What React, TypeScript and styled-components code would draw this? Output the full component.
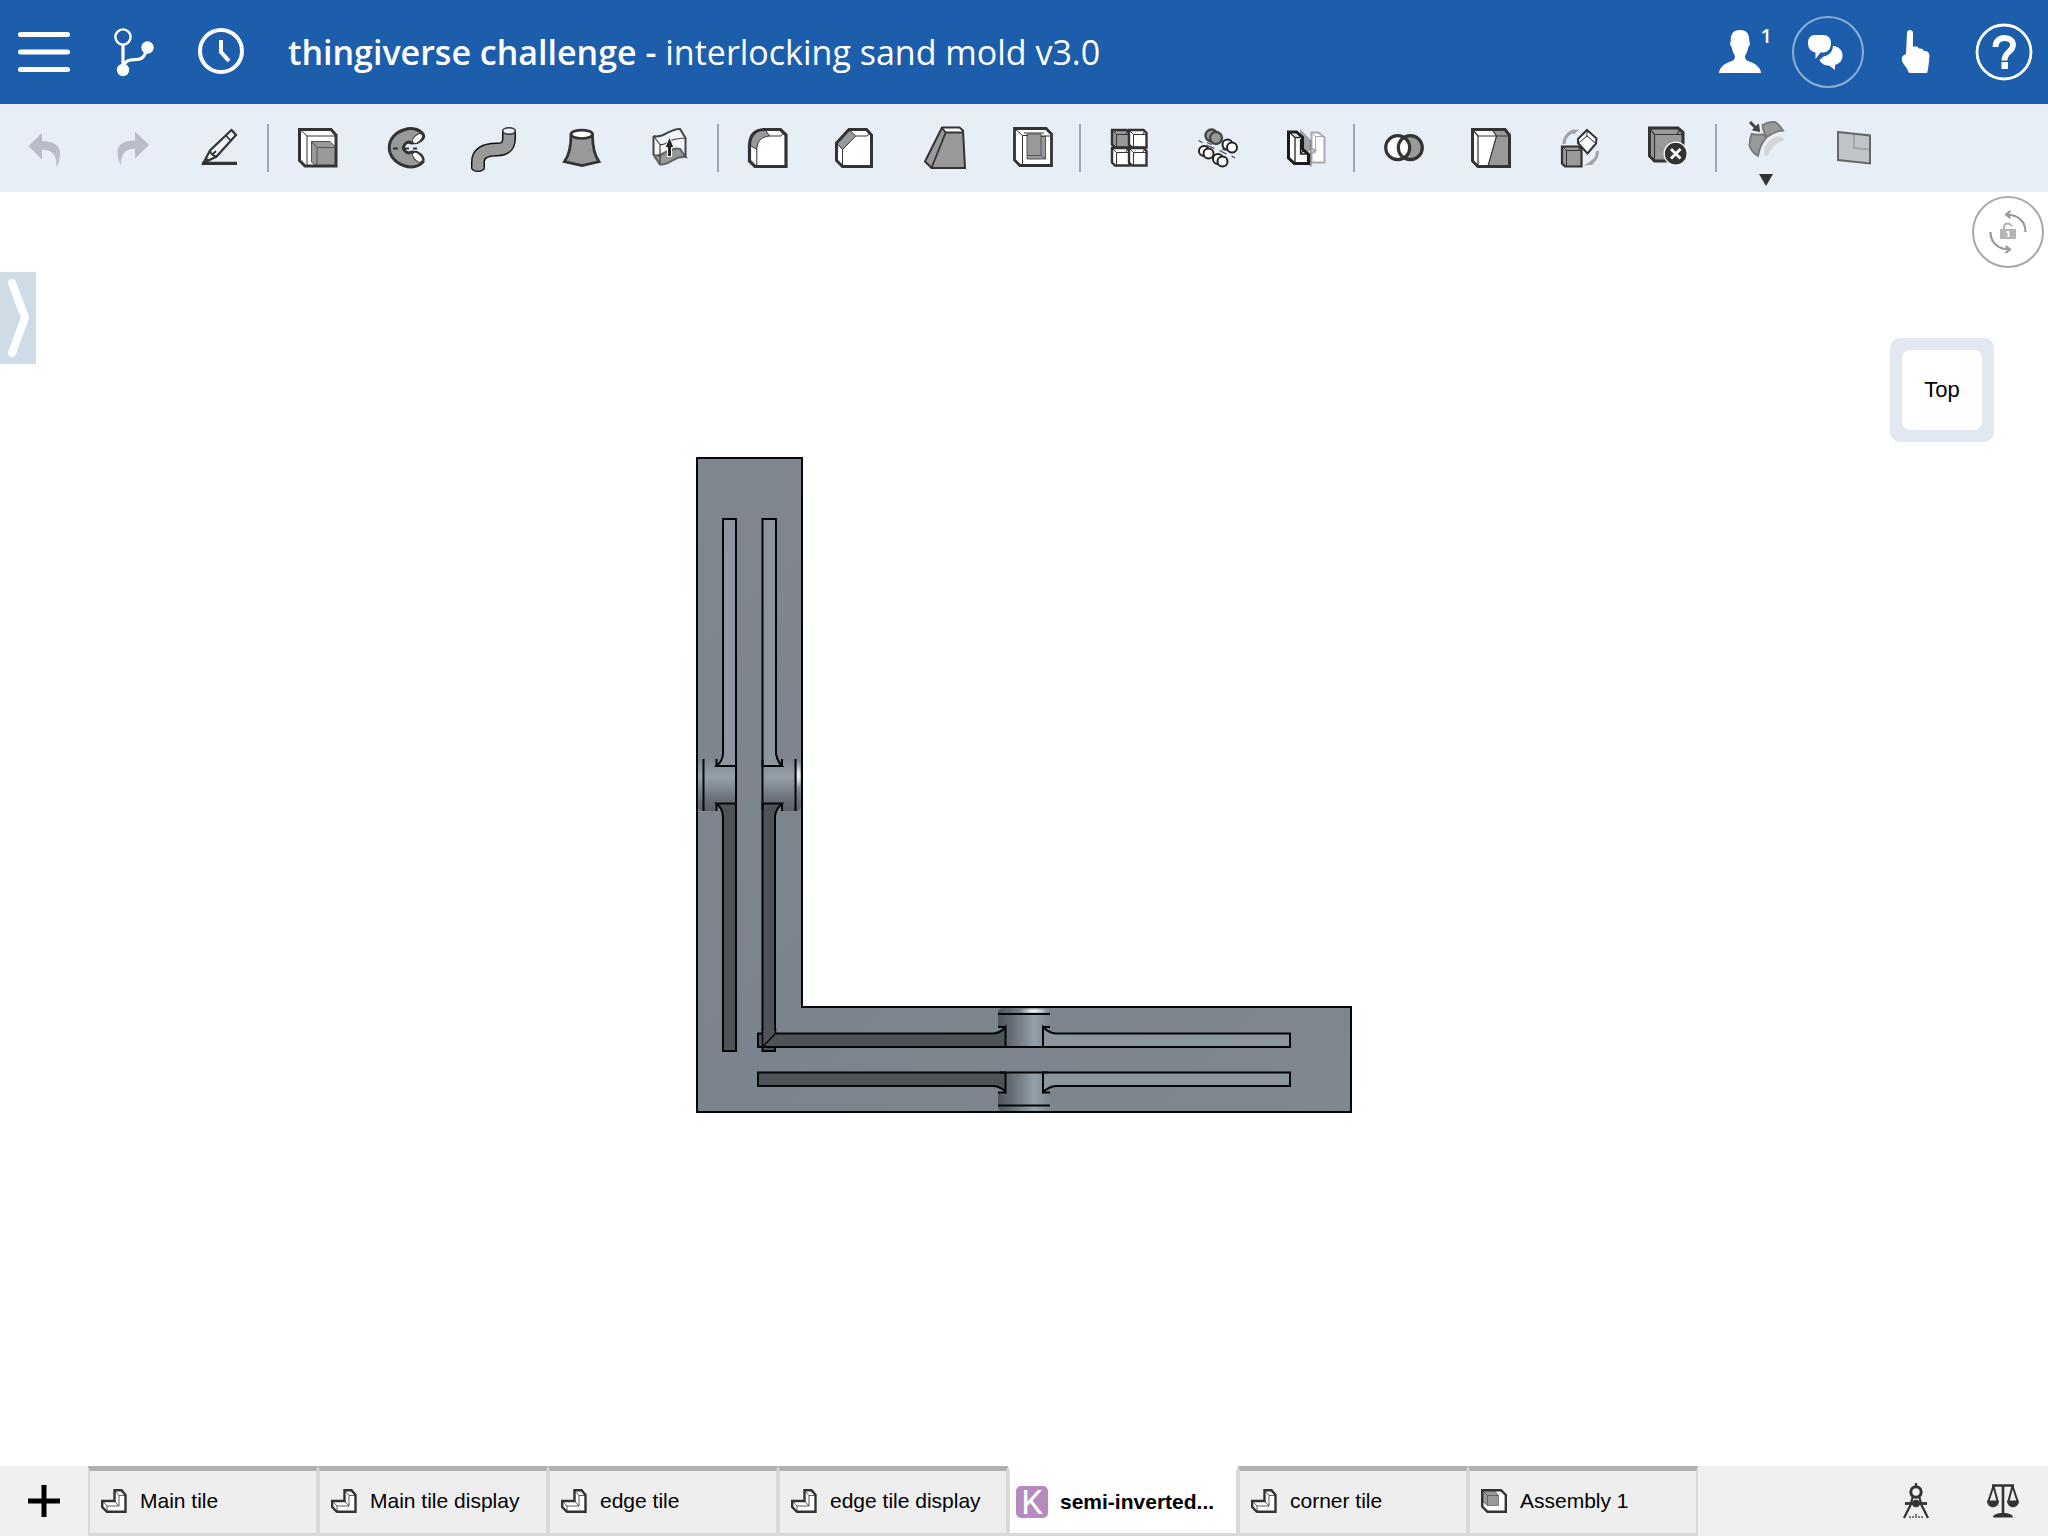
import React from "react";
import styled, { createGlobalStyle, css } from "styled-components";

const GlobalStyle = createGlobalStyle`
  *, *::before, *::after { box-sizing: border-box; }
  body { margin: 0; background: #fff; font-family: "Liberation Sans", Arial, sans-serif; color: #000; }
  svg { display: block; flex: none; }
`;

const INK = "#333";
const GREY = "#999";

/* ---------- layout ---------- */

const Page = styled.div`
  display: flex;
  flex-direction: column;
  min-height: 100vh;
`;

const bareButton = css`
  display: flex;
  align-items: center;
  justify-content: center;
  padding: 0;
  border: 0;
  background: none;
  font: inherit;
  color: inherit;
  cursor: pointer;
`;

const Header = styled.header`
  display: flex;
  align-items: center;
  height: 104px;
  background: #1d5eac;
  color: #fff;
`;

const HeaderButton = styled.button`
  ${bareButton}
  width: 88px;
  height: 104px;
`;

const Title = styled.h1`
  flex: 1;
  min-width: 0;
  margin: 0;
  padding-left: 24px;
  font: 400 34px/48px "Open Sans", "Noto Sans", sans-serif;
  white-space: nowrap;
  overflow: hidden;
  text-overflow: ellipsis;
`;

const Strong = styled.strong`
  font-weight: 600;
`;

const Sup = styled.span`
  align-self: flex-start;
  padding-top: 24px;
  font: 600 20px/24px "Open Sans", "Noto Sans", sans-serif;
`;

const UserButton = styled(HeaderButton)`
  justify-content: flex-end;
  padding-right: 12px;
`;

const Ring = styled.span`
  display: flex;
  align-items: center;
  justify-content: center;
  width: 72px;
  height: 72px;
  border: 2px solid #8eaed5;
  border-radius: 50%;
`;

const Toolbar = styled.div`
  display: flex;
  align-items: center;
  height: 88px;
  background: #e7eef6;
`;

const ToolGroup = styled.div`
  display: flex;
  & + & {
    margin-left: 10px;
  }
  & + &::before {
    content: "";
    width: 2px;
    margin: 20px 5px 20px -7px;
    background: #9aa6b1;
  }
`;

const ToolButton = styled.button`
  ${bareButton}
  position: relative;
  width: 88px;
  height: 88px;
`;

const Caret = styled.span`
  position: absolute;
  bottom: 6px;
  left: 37px;
  border: solid transparent;
  border-width: 12px 7px 0;
  border-top-color: #333;
`;

const Workspace = styled.main`
  position: relative;
  flex: 1;
  display: flex;
  flex-direction: column;
  align-items: center;
  padding-top: 264px;
`;

const PanelHandle = styled.button`
  ${bareButton}
  position: absolute;
  left: 0;
  top: 80px;
  width: 36px;
  height: 92px;
  background: #cfdce6;
`;

const LockButton = styled.button`
  ${bareButton}
  position: absolute;
  top: 4px;
  right: 4px;
  width: 72px;
  height: 72px;
  border: 2px solid #aaa;
  border-radius: 50%;
`;

const ViewCube = styled.button`
  ${bareButton}
  position: absolute;
  top: 146px;
  right: 54px;
  width: 104px;
  height: 104px;
  border-radius: 10px;
  background: #e1e8ef;
  font-size: 22px;
`;

const CubeFace = styled.span`
  display: flex;
  align-items: center;
  justify-content: center;
  width: 80px;
  height: 80px;
  border-radius: 8px;
  background: #fff;
`;

const TabBar = styled.footer`
  display: flex;
  height: 70px;
  background: #f0f0f0;
`;

const BarButton = styled.button`
  ${bareButton}
  width: 88px;
  height: 70px;
`;

const Tabs = styled.nav`
  display: flex;
  flex: 1;
  min-width: 0;
`;

const Tab = styled.a<{ $active?: boolean }>`
  display: flex;
  align-items: center;
  flex: 0 1 230px;
  min-width: 0;
  padding: 0 8px 2px 11px;
  gap: 13px;
  border: 2px solid #d9d9d9;
  border-bottom-width: 3px;
  border-top: 5px solid #b1b1b1;
  background: #eee;
  color: #000;
  font-size: 21px;
  text-decoration: none;
  white-space: nowrap;
  ${(p) =>
    p.$active &&
    css`
      padding: 0 6px;
      gap: 12px;
      border-top-color: #fff;
      background: #fff;
      font-weight: 700;
    `}
`;

const KBadge = styled.span`
  display: flex;
  align-items: center;
  justify-content: center;
  flex: none;
  width: 32px;
  height: 32px;
  border-radius: 5px;
  background: #b48abf;
  color: #fff;
  font: 400 34px/32px Roboto, "Liberation Sans", sans-serif;
`;

/* ---------- toolbar icons ---------- */

const Icon = ({ children }: { children: React.ReactNode }) => (
  <svg width="52" height="52" viewBox="0 0 52 52" fill="none" aria-hidden="true">
    {children}
  </svg>
);

const Undo = () => (
  <Icon>
    <path fill="#b9bdc7" d="M10.5 24 24 11v8c12 0 18 5 18 12 0 6-1.5 10-3.5 14C38.5 33 35 28 24 27.5v10z" />
  </Icon>
);

const Redo = () => (
  <Icon>
    <path fill="#b9bdc7" d="M43 23 29 9.500v9c-12 0-17.500 4.500-17.500 11.500 0 6 1.500 10 3.500 13.500C15 33 18 27 29 26.500v10z" />
  </Icon>
);

const Sketch = () => (
  <Icon>
    <path d="M8 41.300h35" stroke={INK} strokeWidth="3.300" />
    <path d="M37.500 8 42 13 22.500 34.500 9.500 41 16 28.500z" fill="#f2f5f9" stroke={INK} strokeWidth="2.200" />
    <path d="M16 28.500q1 5 6.500 6M31.500 13l5.500 6M19 32l3-3" stroke={INK} strokeWidth="1.800" />
    <path d="M9 41.500 12 35.500l4 3z" fill={INK} />
  </Icon>
);

const Extrude = () => (
  <Icon>
    <path d="M7.500 7.500H39l5 5.500v31H13l-5.500-5.500z" fill="#fff" />
    <path d="M44 14H15v30M15 14 8 7.500" stroke={INK} strokeWidth="1" />
    <path d="M19.500 19.500H38l6 6V44H25l-5.500-4z" fill={GREY} stroke="#555" strokeWidth="1" />
    <path d="M44 25.500H25V44M25 25.500l-5.500-6" stroke="#555" strokeWidth="1" />
    <path d="M7.500 7.500H39l5 5.500v31H13l-5.500-5.500z" stroke={INK} strokeWidth="3" />
  </Icon>
);

const Revolve = () => (
  <Icon>
    <path
      d="M43 12C39 6.500 31 5.500 25 7.500c-21 6-21 30 0 36.500 7 2 14 .5 18-4 1-4-2-7.500-6-9.500l-5.500-.5a5.200 5.200 0 1 1 0-9l5.500-.5c5-2 8-5 6-8.500z"
      fill={GREY}
      stroke={INK}
      strokeWidth="3"
    />
    <ellipse cx="37.500" cy="16.500" rx="6" ry="3.400" transform="rotate(-45 37.500 16.500)" fill="#fff" stroke={INK} strokeWidth="1" />
    <ellipse cx="37.500" cy="35.200" rx="6" ry="3.400" transform="rotate(45 37.500 35.200)" fill="#fff" stroke={INK} strokeWidth="1" />
    <path d="M13 26.500h5M22 26.500h7M33 26.500h4" stroke={INK} strokeWidth="1.800" />
  </Icon>
);

const Sweep = () => (
  <Icon>
    <path d="M41 9v7c0 8-4 11.500-12 11.500-14 0-19 5-19 12V46" stroke="#111" strokeWidth="14" />
    <ellipse cx="10" cy="46" rx="7" ry="4" fill="#111" />
    <path d="M41 9v7c0 8-4 11.500-12 11.500-14 0-19 5-19 12V46" stroke={GREY} strokeWidth="11" />
    <ellipse cx="10" cy="46" rx="5.500" ry="2.700" fill={GREY} />
    <ellipse cx="41" cy="9" rx="6.300" ry="3.200" fill="#e7eef6" stroke={INK} strokeWidth="1.500" />
  </Icon>
);

const Loft = () => (
  <Icon>
    <path d="M15 13c0 11-1 19-6.500 26.500L26 43.500l17-4C37.500 32 36.500 24 36.500 13z" fill={GREY} stroke={INK} strokeWidth="2.800" />
    <ellipse cx="25.800" cy="12.300" rx="10.800" ry="4.200" fill="#fff" stroke={INK} strokeWidth="2.600" />
  </Icon>
);

const Thicken = () => (
  <Icon>
    <path d="M9.500 14C20 17 26 6 36 7l5.500 9v19L16 42.500 9.500 33z" fill="#f3f5f8" />
    <path d="M9.500 33C17 37 25 24 36 27l5.500 8C30 33 28 43 16 42.500z" fill={GREY} stroke="#666" strokeWidth="2.200" />
    <path d="M9.500 14C20 17 26 6 36 7l5.500 9v19M9.500 14v19" stroke="#444" strokeWidth="2" />
    <path d="m9.500 14 6.500 8.500V42M16 22.500c4 1 6-1 9-3s9-3 16-3.500" stroke="#444" strokeWidth="1.200" />
    <path d="m25.500 15 4.500 10.500h-2.500v9h-4v-9H21z" fill="#222" stroke="#fff" strokeWidth="1" />
  </Icon>
);

const Fillet = () => (
  <Icon>
    <path d="M23 7.500h15.500L44 13v31.500H13L7.500 39V23C8 13 13 7.500 23 7.500z" fill="#fff" />
    <path d="M7.500 23C8 13 13 7.500 23 7.500l4.500 6.500C19 15 15 19 14.800 27.500z" fill={GREY} stroke={INK} strokeWidth="1" />
    <path d="M14.800 27.500v17M27.500 14H39l3-4" stroke={INK} strokeWidth="1" />
    <path d="M23 7.500h15.500L44 13v31.500H13L7.500 39V23C8 13 13 7.500 23 7.500z" stroke={INK} strokeWidth="3.200" />
  </Icon>
);

const Chamfer = () => (
  <Icon>
    <path d="M6.500 21 19 7.500h17.500l5 5.500v31.500h-29l-6-6z" fill="#fff" />
    <path d="M6.500 21 19 7.500l6.700 6.500-13.200 13.500z" fill={GREY} stroke={INK} strokeWidth="1" />
    <path d="M12.500 27.500v17M25.700 14H37l3-4" stroke={INK} strokeWidth="1" />
    <path d="M6.500 21 19 7.500h17.500l5 5.500v31.500h-29l-6-6z" stroke={INK} strokeWidth="3" />
  </Icon>
);

const Draft = () => (
  <Icon>
    <path d="M24 5.500h17.500l3.500 3L47 46H13.500L7 39.500z" fill={GREY} />
    <path d="M24 5.500h17.500l3 5H27.700z" fill="#fff" />
    <path d="M44.500 10.500H27.700L13.500 46M27.700 10.500l-4-5" stroke={INK} strokeWidth="1.800" />
    <path d="M24 5.500h17.500l3.500 3L47 46H13.500L7 39.500z" stroke={INK} strokeWidth="2" />
  </Icon>
);

const Shell = () => (
  <Icon>
    <path d="M8.500 6.500H40l5.500 5.500v31.500H14L8.500 38z" fill="#fff" />
    <path d="M21 12h14v2.500h4.500V37H21z" fill={GREY} stroke="#555" strokeWidth="1" />
    <path d="M35 14v19.500H21M35 33.500l4.500 3.500" stroke="#555" strokeWidth="1" />
    <path d="M16.500 43.500V13.500h5M35 14h9M16.500 13.500l-8-7M18 11h20" stroke={INK} strokeWidth="1" />
    <path d="M8.500 6.500H40l5.500 5.500v31.500H14L8.500 38z" stroke={INK} strokeWidth="2.800" />
  </Icon>
);

const MiniCube = ({ x, y, fill = "#fff" }: { x: number; y: number; fill?: string }) => (
  <g transform={`translate(${x} ${y})`}>
    <path d="M0 0h14.500l3 3v14.500H3l-3-3z" fill={fill} stroke={INK} strokeWidth="2.400" />
    <path d="M17 4.500H4.500V17M4.500 4.500 0 0M13.500 4.500l2-3" stroke={INK} strokeWidth="1" />
  </g>
);

const LinearPattern = () => (
  <Icon>
    <MiniCube x={8} y={8} fill={GREY} />
    <MiniCube x={25} y={8} />
    <MiniCube x={8} y={26} />
    <MiniCube x={25} y={26} />
  </Icon>
);

const CircularPattern = () => (
  <Icon>
    <g fill={GREY} stroke="#444" strokeWidth="2.400">
      <circle cx="19.500" cy="13.500" r="6" />
      <circle cx="24" cy="16" r="6" />
    </g>
    <g fill="#fff" stroke="#222" strokeWidth="2">
      <circle cx="35.500" cy="22.500" r="5" />
      <circle cx="40" cy="25.500" r="5" />
      <circle cx="12" cy="29" r="5" />
      <circle cx="16.500" cy="31.500" r="5" />
      <circle cx="26" cy="37" r="5" />
      <circle cx="30.500" cy="39.500" r="5" />
    </g>
    <path d="m6.500 18.500 4 2M14.500 23l8 3.500M15 20.500l5 2M27.500 28.500l7 3.500M30 27l4 1.500M39.500 34l3.500 2" stroke="#444" strokeWidth="1.200" />
  </Icon>
);

const Mirror = () => (
  <Icon>
    <path d="m20 7 11 11v9l-4 4-7-6z" fill="#9ea2a7" />
    <path d="M31.500 10.500h7l6 5v25H31.500V31l4-2.500-4-2z" fill="#fff" stroke="#aaa" strokeWidth="2" />
    <path d="M35.500 14.500v14M35.500 14.500h7M35.500 14.500l-4-4M31 31h5" stroke="#aaa" strokeWidth="1" />
    <path d="M30.700 18v26.500" stroke="#888" strokeWidth="1.600" />
    <path d="M8.500 10h8l6 5.500V27l6 5.500v9H14.500L8.500 36z" fill="#fff" stroke="#1c1a1b" strokeWidth="3" />
    <path d="M15 41V15.500h5M15 15.500 9 10M20.500 17v15h7M20.500 32l3-4" stroke="#222" strokeWidth="1.300" />
  </Icon>
);

const BooleanOp = () => (
  <Icon>
    <circle cx="32.300" cy="25.700" r="12.300" fill={GREY} />
    <circle cx="19.700" cy="25.700" r="12.300" fill="#fff" />
    <g stroke={INK} strokeWidth="3.200">
      <circle cx="32.300" cy="25.700" r="12" />
      <circle cx="19.700" cy="25.700" r="12" />
    </g>
  </Icon>
);

const Split = () => (
  <Icon>
    <path d="M6.500 7.500H39l4.500 5.500v31.500H12L6.500 39z" fill={GREY} />
    <path d="M6.500 7.500h19.500L30.500 14 22 44.500H12L6.500 39z" fill="#fff" />
    <path d="M12 44V14h32M12 14 6.500 7.500M26 7.500l4.500 6.500L22 44" stroke={INK} strokeWidth="1.200" />
    <path d="M6.500 7.500H39l4.500 5.500v31.500H12L6.500 39z" stroke={INK} strokeWidth="3" />
  </Icon>
);

const Transform = () => (
  <Icon>
    <path d="M10 22c0-7 5-12 11-13" stroke="#a0a2a5" strokeWidth="3" />
    <path d="m17 8 8-.5-5 5z" fill="#a0a2a5" />
    <path d="M43.500 29c0 7-3.500 10.500-8 12.500" stroke="#a0a2a5" strokeWidth="3" />
    <path d="m30 43.500 8-5 1.500 4z" fill="#a0a2a5" />
    <path d="M8 24.500h17l2.500 2.500v17.500H11l-3-3z" fill={GREY} stroke={INK} strokeWidth="2.200" />
    <path d="M27.500 28.500h-15v16M12.500 28.500l-4-4M24 28.500l2-3" stroke={INK} strokeWidth="1" />
    <path d="m33 8 9.500 8.500-.5 5-8.500 10-9.500-10.500v-4z" fill="#fff" stroke={INK} strokeWidth="2" />
    <path d="M33 8v6l-8.500 7M33 14l8.500 7" stroke={INK} strokeWidth="1" />
  </Icon>
);

const DeletePart = () => (
  <Icon>
    <path d="M7.500 6H36l5 4.500V39H12.500l-5-5z" fill={GREY} stroke={INK} strokeWidth="3" />
    <path d="M12.500 39V12.500H41M12.500 12.500 7 6M35 12.500l3-5" stroke={INK} strokeWidth="1.200" />
    <circle cx="33.700" cy="31.700" r="11.500" fill={INK} stroke="#fff" strokeWidth="1.300" />
    <path d="m29 27 9.500 9.500M38.500 27 29 36.500" stroke="#fff" strokeWidth="2.800" />
  </Icon>
);

/* Drawn in the upper part of the box, above the drop-down caret. */
const ModifyFillet = () => (
  <svg width="52" height="64" viewBox="0 -6 52 64" fill="none" aria-hidden="true">
    <path d="M43.500 17c-3.500-3-7-3-10-1-5 3-9 8-9.500 11.500 0 3 1 5.500 2.500 7.500C31 26 37 20 43.500 18.500z" fill="#d2d4d6" />
    <path d="M11.500 12c3 .5 6 1 12 .5l2.500 3.500C22 20 19.500 26 18 34c-4-2-7.500-7-8.500-10 0-5 .5-8.500 2-12z" fill={GREY} stroke="#777" strokeWidth="1.800" />
    <path d="M22.500 3c4-2.500 9-3.500 12.500-3 3 1.500 6 5 8 8.500-5 0-11 3-16 6.500-2-2.500-4-7-4.500-12z" fill={GREY} stroke="#777" strokeWidth="1.800" />
    <path d="m10 0 6 6" stroke="#444" strokeWidth="3" />
    <path d="m12.500 8 7 1.500-1-7.500z" fill="#444" stroke="#444" />
  </svg>
);

const Plane = () => (
  <Icon>
    <path d="M10 10 42 13.500V41.500L10 38z" fill="#c0c4c9" stroke="#666" strokeWidth="2" />
    <path d="M26 13v13l15 1.500" stroke="#a0a4a8" strokeWidth="1.800" />
  </Icon>
);

/* ---------- header, workspace and tab icons ---------- */

const MenuIcon = () => (
  <svg width="52" height="40" viewBox="0 0 52 40" stroke="#fff" strokeWidth="5" strokeLinecap="round" aria-hidden="true">
    <path d="M2.500 2.500h47M2.500 20h47M2.500 37.500h47" />
  </svg>
);

const BranchIcon = () => (
  <svg width="48" height="50" viewBox="0 0 48 50" fill="none" stroke="#fff" aria-hidden="true">
    <circle cx="15" cy="10" r="7.600" strokeWidth="2.400" />
    <path d="M15 18v25M15 42c2-11 9-9 14-9.500 6-.5 8-4 10-11" strokeWidth="3.200" />
    <circle cx="15" cy="43" r="6.200" fill="#fff" stroke="none" />
    <circle cx="39.500" cy="20.500" r="6.200" fill="#fff" stroke="none" />
  </svg>
);

const ClockIcon = () => (
  <svg width="48" height="48" viewBox="0 0 48 48" fill="none" stroke="#fff" strokeWidth="4" aria-hidden="true">
    <circle cx="25" cy="23" r="21" />
    <path d="M25 12v12l8 9" />
  </svg>
);

const UserIcon = () => (
  <svg width="42" height="44" viewBox="0 0 42 44" fill="#fff" aria-hidden="true">
    <path d="M21 0c7 0 9.500 4 9.300 12 1.200 1 .5 4-1 5-.8 5-2.300 7-3.300 9 0 5 4 5 8 7 5 2.500 7.500 6 8 9.500v.5H0v-.5C.5 39 3 35.500 8 33c4-2 8-2 8-7-1-2-2.500-4-3.300-9-1.500-1-2.200-4-1-5C11.500 4 14 0 21 0z" />
  </svg>
);

const ChatIcon = () => (
  <svg width="40" height="36" viewBox="0 0 40 36" fill="#fff" aria-hidden="true">
    <path d="M7 1h8c5 0 8 3 8 8s-2.500 9.500-8 9.500h-2.500L7.500 25v-6.500C2.500 17.500 0 14 0 9c0-5 2.500-8 7-8z" />
    <path d="M25 12c6 .5 9.500 4 9.500 9.500 0 4.500-2.500 8-7.500 9.500v5l-6-4.500c-4.500 0-8-2-9.500-5.500l4-3.500C21 21.500 24.500 18 25 12z" />
  </svg>
);

const HandIcon = () => (
  <svg width="30" height="44" viewBox="0 0 30 44" fill="#fff" aria-hidden="true">
    <path d="M6 3c0-4 6-4 6 0v14c2-1.500 5-.5 6 1.500 3-.5 4.500 1 5 2.500 3-.5 5.500 1.500 5.500 5-.5 6-1 11-2 15.500 0 1-.5 1.500-1.500 1.500H9c-1 0-1.500-1-2-2-1-3-3.500-5.500-5-8C0 30 0 25.500 5 24z" />
  </svg>
);

const HelpIcon = () => (
  <svg width="58" height="58" viewBox="0 0 58 58" fill="none" stroke="#fff" aria-hidden="true">
    <circle cx="29" cy="29" r="27" strokeWidth="2.800" />
    <path d="M20.500 24c0-6 3.500-9 9-9s8.500 3 8.500 7c0 7-8.500 6.500-8.500 15.500" strokeWidth="5.800" />
    <path d="M26.500 39h6.500v7h-6.500z" fill="#fff" stroke="none" />
  </svg>
);

const ChevronIcon = () => (
  <svg width="36" height="92" viewBox="0 0 36 92" fill="none" stroke="#fff" strokeWidth="8" strokeLinecap="round" strokeLinejoin="round" aria-hidden="true">
    <path d="m12 11 13 34.500L12 81" />
  </svg>
);

const RotateLockIcon = () => (
  <svg width="44" height="44" viewBox="0 0 44 44" fill="none" stroke="#999" strokeWidth="2.200" aria-hidden="true">
    <path d="M21 4.500C33 5 39.500 12 39.500 22M23 39.500C11 39 4.500 32 4.500 22M24.500 1 20 4.500 24.500 8M19.500 36l4.500 3.500-4.500 3.500" />
    <path d="M18 19v-2c0-4.500 7.500-4.500 7.500-.5" stroke="#b5b5b5" strokeWidth="2" />
    <path d="M14 19h16v10H14z" fill="#b5b5b5" stroke="none" />
    <path d="M20.500 22h2v5" stroke="#fff" strokeWidth="1.800" />
  </svg>
);

const PlusIcon = () => (
  <svg width="32" height="32" viewBox="0 0 32 32" stroke="#000" strokeWidth="5" aria-hidden="true">
    <path d="M0 16h32M16 0v32" />
  </svg>
);

const PartIcon = () => (
  <svg width="26" height="24" viewBox="0 0 26 24" fill="#fff" stroke={INK} aria-hidden="true">
    <path d="M13.500 1.200H20.500l4 4.800v16.800H6L1.200 18V12h12.300z" strokeWidth="2.400" />
    <path d="m1.500 12 4.500 5v6M6 17h12M18 17l-4.500-5M24 6.500h-6V17M18 6.500l-4.500-5" fill="none" strokeWidth=".8" />
  </svg>
);

const AssemblyIcon = () => (
  <svg width="26" height="24" viewBox="0 0 26 24" fill="none" stroke={INK} aria-hidden="true">
    <path d="M1.200 1.200H20l4.800 4.800v16.800H6.500L1.200 17.500z" fill="#fff" />
    <path d="M1 1h12l4.500 5.500v10h-11L1 12z" fill={GREY} stroke="#666" strokeWidth=".8" />
    <path d="M17.500 6.500h-11v10M6.500 6.500 1 1" stroke="#555" strokeWidth=".8" />
    <path d="M1.200 1.200H20l4.800 4.800v16.800H6.500L1.200 17.500z" strokeWidth="2.400" />
  </svg>
);

const CompassIcon = () => (
  <svg width="28" height="36" viewBox="0 0 28 36" fill="none" stroke={INK} aria-hidden="true">
    <path d="M14 0v5" strokeWidth="2.200" />
    <circle cx="14" cy="9" r="5.200" strokeWidth="3" />
    <path d="M11 13 8.500 22 2 35M17 13l2.500 9L26 35" strokeWidth="2.200" />
    <path d="M3 20.500h22" strokeWidth="2.800" />
    <circle cx="14" cy="20.500" r="3.800" fill={INK} stroke="none" />
    <path d="M8 35v-2M11 35v-2M14 35v-4M17 35v-2M20 35v-2" strokeWidth="1.200" />
  </svg>
);

const ScalesIcon = () => (
  <svg width="34" height="34" viewBox="0 0 34 34" fill="none" stroke={INK} aria-hidden="true">
    <path d="M5 1.500h22M16 1v29" strokeWidth="2.600" />
    <path d="M6.500 2 1.500 17M6.500 2l4 15M25.500 2l-4 15M25.500 2l5 15" strokeWidth="2" />
    <path d="M0 16.500h12c0 9-12 9-12 0zM20 16.500h12c0 9-12 9-12 0zM6 33.500c0-3 4-4.500 10-4.500s10 1.500 10 4.500z" fill={INK} stroke="none" />
  </svg>
);

/* ---------- model ---------- */

const Model = () => (
  <svg width="658" height="658" viewBox="695 456 658 658" fill="none" stroke="#050607" strokeWidth="2" role="img" aria-label="Top view of the part">
    <defs>
      <linearGradient id="body" x1="0" y1="0" x2="1" y2="1">
        <stop offset="0" stopColor="#80878e" />
        <stop offset=".5" stopColor="#7b838c" />
        <stop offset="1" stopColor="#80878e" />
      </linearGradient>
      <linearGradient id="pinV" x1="0" y1="0" x2="0" y2="1">
        <stop offset="0" stopColor="#7c868e" />
        <stop offset=".35" stopColor="#95a0a8" />
        <stop offset=".75" stopColor="#6c737b" />
        <stop offset="1" stopColor="#5b6168" />
      </linearGradient>
      <linearGradient id="pinH" x1="0" y1="0" x2="1" y2="0">
        <stop offset="0" stopColor="#4f565b" />
        <stop offset=".25" stopColor="#646b73" />
        <stop offset=".7" stopColor="#95a0a8" />
        <stop offset="1" stopColor="#7c868e" />
      </linearGradient>
      <radialGradient id="shine">
        <stop offset="0" stopColor="#fff" />
        <stop offset="1" stopColor="#fff" stopOpacity="0" />
      </radialGradient>
    </defs>

    <path d="M697 458h105v549h549v105H697z" fill="url(#body)" />

    <g stroke="none">
      <path d="M717 759h-14q-5 0-5 5v42q0 5 5 5h14v-6h19v-40h-19z" fill="url(#pinV)" />
      <path d="M782 759h14q5 0 5 5v42q0 5-5 5h-14v-6h-20v-40h20z" fill="url(#pinV)" />
      <path d="M998 1027v-14q0-5 5-5h42q5 0 5 5v14h-6v20h-40v-20z" fill="url(#pinH)" />
      <path d="M998 1092v14q0 5 5 5h42q5 0 5-5v-14h-6v-20h-40v20z" fill="url(#pinH)" />
      <ellipse cx="798.500" cy="775" rx="3" ry="14" fill="url(#shine)" />
      <ellipse cx="1034" cy="1011" rx="14" ry="3" fill="url(#shine)" />
    </g>

    <g fill="#8b969f">
      <path d="M723 519h13v247h-19.500q6-5 6.500-12z" />
      <path d="M762.500 519H776v235q1 7 6 12h-19.500z" />
      <path d="M1290 1033.500V1047h-247v-20q6 6 13 6.500z" />
      <path d="M1290 1086v-13.500h-247V1092q6-5.500 13-6z" />
    </g>
    <g fill="#4d5357">
      <path d="M723 1051h13V803.500h-19.500q6 5 6.500 13z" />
      <path d="M758 1086v-13.500h247.500V1092q-5-5.500-12-6z" />
      <path d="M762.500 1051H775V816q1-7 7-12.500h-19.500z" />
      <path d="M758 1033.500V1047h247.500v-20q-5 6-12 6.500z" />
    </g>
    <path d="M762.500 1030v17L775.500 1033.500V1030z" fill="#4d5357" stroke="none" />
    <path d="M762.500 1028v19L775.500 1033.500V1028" strokeWidth="1.500" />

    <path d="M736 760v50M762.500 760v50M1000 1047h48M1000 1072.500h48" />
    <path d="M703.500 759v52M795.500 759v52M716.500 759v7M782 759v7M716.500 803v8M782 803v8" />
    <path d="M998 1014h52M998 1105.500h52M998 1027h8M998 1092.500h8M1043 1027h7M1043 1092.500h7" />
  </svg>
);

/* ---------- data ---------- */

type Tool = { label: string; icon: React.FC; menu?: boolean };

const toolGroups: Tool[][] = [
  [
    { label: "Undo", icon: Undo },
    { label: "Redo", icon: Redo },
    { label: "Sketch", icon: Sketch },
  ],
  [
    { label: "Extrude", icon: Extrude },
    { label: "Revolve", icon: Revolve },
    { label: "Sweep", icon: Sweep },
    { label: "Loft", icon: Loft },
    { label: "Thicken", icon: Thicken },
  ],
  [
    { label: "Fillet", icon: Fillet },
    { label: "Chamfer", icon: Chamfer },
    { label: "Draft", icon: Draft },
    { label: "Shell", icon: Shell },
  ],
  [
    { label: "Linear pattern", icon: LinearPattern },
    { label: "Circular pattern", icon: CircularPattern },
    { label: "Mirror", icon: Mirror },
  ],
  [
    { label: "Boolean", icon: BooleanOp },
    { label: "Split", icon: Split },
    { label: "Transform", icon: Transform },
    { label: "Delete part", icon: DeletePart },
  ],
  [
    { label: "Modify fillet", icon: ModifyFillet, menu: true },
    { label: "Plane", icon: Plane },
  ],
];

const tabs = [
  { name: "Main tile", icon: <PartIcon /> },
  { name: "Main tile display", icon: <PartIcon /> },
  { name: "edge tile", icon: <PartIcon /> },
  { name: "edge tile display", icon: <PartIcon /> },
  { name: "semi-inverted...", icon: <KBadge>K</KBadge>, active: true },
  { name: "corner tile", icon: <PartIcon /> },
  { name: "Assembly 1", icon: <AssemblyIcon /> },
];

export default function App() {
  return (
    <Page>
      <GlobalStyle />
      <Header>
        <HeaderButton aria-label="Menu"><MenuIcon /></HeaderButton>
        <HeaderButton aria-label="Versions"><BranchIcon /></HeaderButton>
        <HeaderButton aria-label="History"><ClockIcon /></HeaderButton>
        <Title>
          <Strong>thingiverse challenge - </Strong>interlocking sand mold v3.0
        </Title>
        <UserButton aria-label="Collaborators">
          <UserIcon />
          <Sup>1</Sup>
        </UserButton>
        <HeaderButton aria-label="Comments"><Ring><ChatIcon /></Ring></HeaderButton>
        <HeaderButton aria-label="Touch mode"><HandIcon /></HeaderButton>
        <HeaderButton aria-label="Help"><HelpIcon /></HeaderButton>
      </Header>

      <Toolbar role="toolbar" aria-label="Features">
        {toolGroups.map((group) => (
          <ToolGroup key={group[0].label}>
            {group.map(({ label, icon: Glyph, menu }) => (
              <ToolButton key={label} aria-label={label}>
                <Glyph />
                {menu && <Caret />}
              </ToolButton>
            ))}
          </ToolGroup>
        ))}
      </Toolbar>

      <Workspace>
        <Model />
        <PanelHandle aria-label="Open panel"><ChevronIcon /></PanelHandle>
        <LockButton aria-label="Lock rotation"><RotateLockIcon /></LockButton>
        <ViewCube><CubeFace>Top</CubeFace></ViewCube>
      </Workspace>

      <TabBar>
        <BarButton aria-label="Add tab"><PlusIcon /></BarButton>
        <Tabs>
          {tabs.map((t) => (
            <Tab key={t.name} href="#" $active={t.active}>
              {t.icon}
              {t.name}
            </Tab>
          ))}
        </Tabs>
        <BarButton aria-label="Measure"><CompassIcon /></BarButton>
        <BarButton aria-label="Mass properties"><ScalesIcon /></BarButton>
      </TabBar>
    </Page>
  );
}
